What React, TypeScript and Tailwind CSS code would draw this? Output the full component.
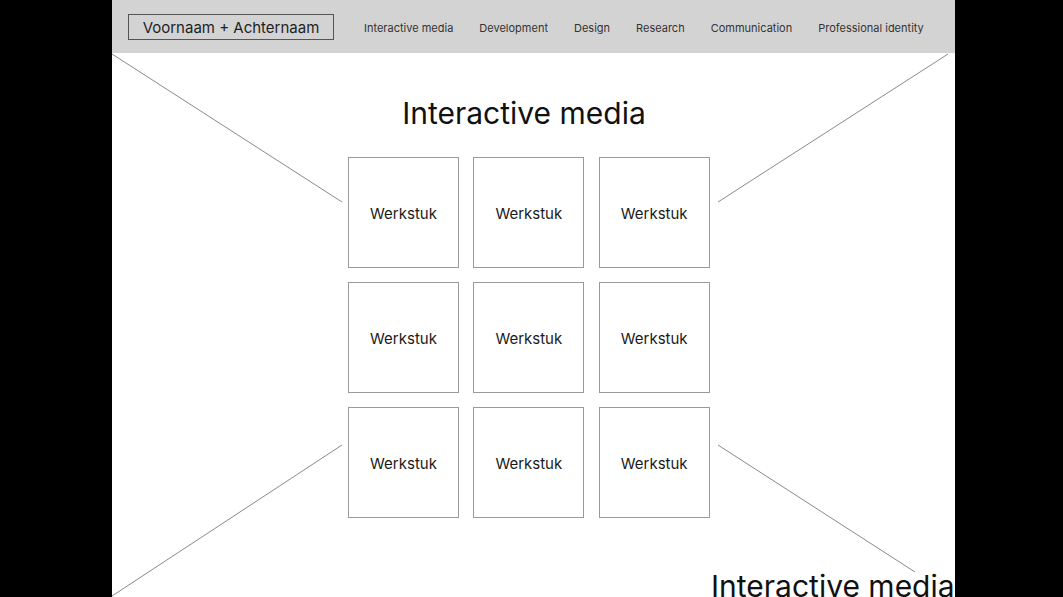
const links = ['Interactive media', 'Development', 'Design', 'Research', 'Communication', 'Professional identity'];

const WorkTile = () => (
  <div className="w-[111px] h-[111px] border border-[#9a9a9a] flex items-center justify-center pt-[3px] text-[15px] text-[#1a1a1a]">
    Werkstuk
  </div>
);

export default function App() {
  return (
    <div className="w-[1063px] h-[597px] bg-black flex overflow-hidden" style={{ fontFamily: 'Inter, "Noto Sans", sans-serif' }}>
      <div className="w-[112px] shrink-0" />
      <div className="relative w-[843px] h-[597px] bg-white overflow-hidden shrink-0">
        {/* connector lines drawn over the page */}
        <svg className="absolute inset-0 pointer-events-none" width="843" height="597">
          <g stroke="#8a8a8a" strokeWidth="1">
            <line x1="0" y1="54" x2="230" y2="202" />
            <line x1="836" y1="54" x2="606" y2="202" />
            <line x1="230" y1="445" x2="0" y2="596" />
            <line x1="606" y1="445" x2="803" y2="572" />
          </g>
        </svg>

        <nav className="h-[53px] bg-[#d3d3d3] flex items-center pl-[16px]">
          <div className="w-[206px] h-[26px] border border-[#555] flex items-center justify-center pt-[3px] text-[15px] text-[#1f1f1f]">
            Voornaam + Achternaam
          </div>
          <div className="flex items-center gap-[26px] ml-[30px] mt-[3px] text-[11px] text-[#333]">
            {links.map((l) => (
              <span key={l}>{l}</span>
            ))}
          </div>
        </nav>

        <div className="w-[362px] ml-[236px]">
          <h1 className="mt-[42px] text-[30px] leading-[36px] text-[#111] text-center pr-[10px]">Interactive media</h1>
          <div className="mt-[26px] grid grid-cols-3 gap-[14px]">
            {Array.from({ length: 9 }).map((_, i) => (
              <WorkTile key={i} />
            ))}
          </div>
        </div>

        <div className="mt-[50px] pl-[599px] text-[30px] leading-[36px] text-[#111] whitespace-nowrap">
          Interactive media
        </div>
      </div>
    </div>
  );
}
